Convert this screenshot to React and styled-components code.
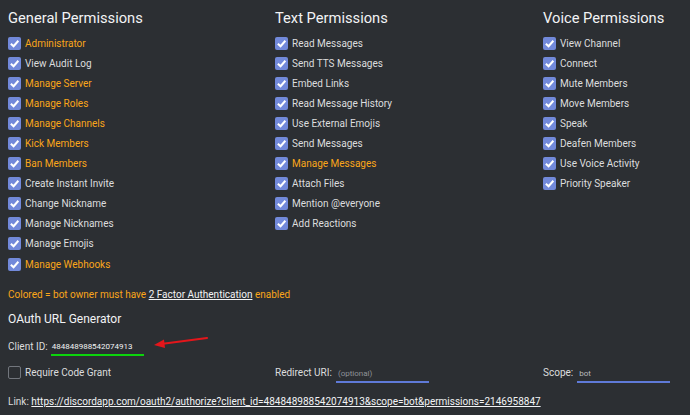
import styled, { createGlobalStyle } from "styled-components";

const GlobalStyle = createGlobalStyle`
  html, body {
    margin: 0;
    padding: 0;
    background: #2c2f33;
  }
  body {
    font-family: Roboto, "Liberation Sans", sans-serif;
    color: #dcddde;
  }
`;

const general = [
  ["Administrator", true],
  ["View Audit Log", false],
  ["Manage Server", true],
  ["Manage Roles", true],
  ["Manage Channels", true],
  ["Kick Members", true],
  ["Ban Members", true],
  ["Create Instant Invite", false],
  ["Change Nickname", false],
  ["Manage Nicknames", false],
  ["Manage Emojis", false],
  ["Manage Webhooks", true],
];

const text = [
  ["Read Messages", false],
  ["Send TTS Messages", false],
  ["Embed Links", false],
  ["Read Message History", false],
  ["Use External Emojis", false],
  ["Send Messages", false],
  ["Manage Messages", true],
  ["Attach Files", false],
  ["Mention @everyone", false],
  ["Add Reactions", false],
];

const voice = [
  ["View Channel", false],
  ["Connect", false],
  ["Mute Members", false],
  ["Move Members", false],
  ["Speak", false],
  ["Deafen Members", false],
  ["Use Voice Activity", false],
  ["Priority Speaker", false],
];

const Check = ({ checked }) => (
  <Box $checked={checked}>
    {checked ? (
      <svg width="11" height="11" viewBox="0 0 12 12">
        <path d="M2 6.2 L5 9 L10.2 3" fill="none" stroke="#fff" strokeWidth="2.2" />
      </svg>
    ) : null}
  </Box>
);

const Column = ({ title, items }) => (
  <div>
    <Heading>{title}</Heading>
    {items.map(([label, colored]) => (
      <Row key={label}>
        <Check checked />
        <Label $colored={colored}>{label}</Label>
      </Row>
    ))}
  </div>
);

const App = () => {
  return (
    <Page>
      <GlobalStyle />
      <Columns>
        <Column title="General Permissions" items={general} />
        <Column title="Text Permissions" items={text} />
        <Column title="Voice Permissions" items={voice} />
      </Columns>

      <Note>
        Colored = bot owner must have <a>2 Factor Authentication</a> enabled
      </Note>

      <SubHeading>OAuth URL Generator</SubHeading>

      <ClientRow>
        Client ID:
        <ClientInput>484848988542074913</ClientInput>
        <Arrow width="56" height="14" viewBox="0 0 56 14">
          <path d="M54 2 L8 8" stroke="#e3161b" strokeWidth="2.2" strokeLinecap="round" />
          <path d="M1 9 L11 3.5 L12 12 Z" fill="#e3161b" />
        </Arrow>
      </ClientRow>

      <FieldsRow>
        <Field>
          <Check checked={false} />
          <span>Require Code Grant</span>
        </Field>
        <Field>
          Redirect URI:
          <TextInput $placeholder>(optional)</TextInput>
        </Field>
        <Field>
          Scope:
          <TextInput>bot</TextInput>
        </Field>
      </FieldsRow>

      <LinkRow>
        Link:{" "}
        <a>
          https://discordapp.com/oauth2/authorize?client_id=484848988542074913&amp;scope=bot&amp;permissions=2146958847
        </a>
      </LinkRow>
    </Page>
  );
};

const Page = styled.div`
  width: 690px;
  height: 415px;
  box-sizing: border-box;
  padding: 8px 8px 0 8px;
  overflow: hidden;
  font-size: 10px;
`;

const Columns = styled.div`
  display: grid;
  grid-template-columns: 267px 268px 1fr;
`;

const Heading = styled.div`
  font-size: 14.7px;
  color: #f2f3f5;
  height: 20px;
  line-height: 20px;
  margin-bottom: 5px;
`;

const Row = styled.div`
  display: flex;
  align-items: center;
  gap: 4px;
  height: 20.1px;
`;

const Box = styled.span`
  display: inline-flex;
  align-items: center;
  justify-content: center;
  width: 13px;
  height: 13px;
  box-sizing: border-box;
  border-radius: 2px;
  flex-shrink: 0;
  background: ${(p) => (p.$checked ? "#7289da" : "transparent")};
  border: ${(p) => (p.$checked ? "none" : "1.5px solid #72767d")};
`;

const Label = styled.span`
  color: ${(p) => (p.$colored ? "#faa61a" : "#dcddde")};
  font-size: 10px;
`;

const Note = styled.div`
  margin-top: 11px;
  color: #faa61a;
  height: 20px;
  line-height: 20px;

  a {
    color: #f2f3f5;
    text-decoration: underline;
  }
`;

const SubHeading = styled.div`
  margin-top: 4px;
  font-size: 12px;
  color: #f2f3f5;
  height: 20px;
  line-height: 20px;
`;

const ClientRow = styled.div`
  margin-top: 7px;
  display: flex;
  align-items: center;
  height: 20px;
`;

const ClientInput = styled.span`
  margin-left: 3px;
  width: 93px;
  box-sizing: border-box;
  padding: 0 0 1px 1px;
  font-size: 8px;
  color: #f2f3f5;
  border-bottom: 2px solid #0cd40c;
  line-height: 13px;
  transform: translateY(2px);
`;

const Arrow = styled.svg`
  margin-left: 9px;
  transform: translateY(-3px);
`;

const FieldsRow = styled.div`
  margin-top: 6px;
  display: grid;
  grid-template-columns: 267px 268px 1fr;
  height: 20px;
`;

const Field = styled.div`
  display: flex;
  align-items: center;
  gap: 4px;
`;

const TextInput = styled.span`
  margin-left: 0;
  width: 93px;
  box-sizing: border-box;
  padding: 0 0 1px 2px;
  font-size: 8px;
  color: ${(p) => (p.$placeholder ? "#8e9297" : "#b9bbbe")};
  border-bottom: 2px solid #5f7ad8;
  line-height: 13px;
  transform: translateY(3px);
`;

const LinkRow = styled.div`
  margin-top: 10px;
  height: 20px;
  line-height: 20px;

  a {
    color: #f2f3f5;
    text-decoration: underline;
  }
`;

export default App;
